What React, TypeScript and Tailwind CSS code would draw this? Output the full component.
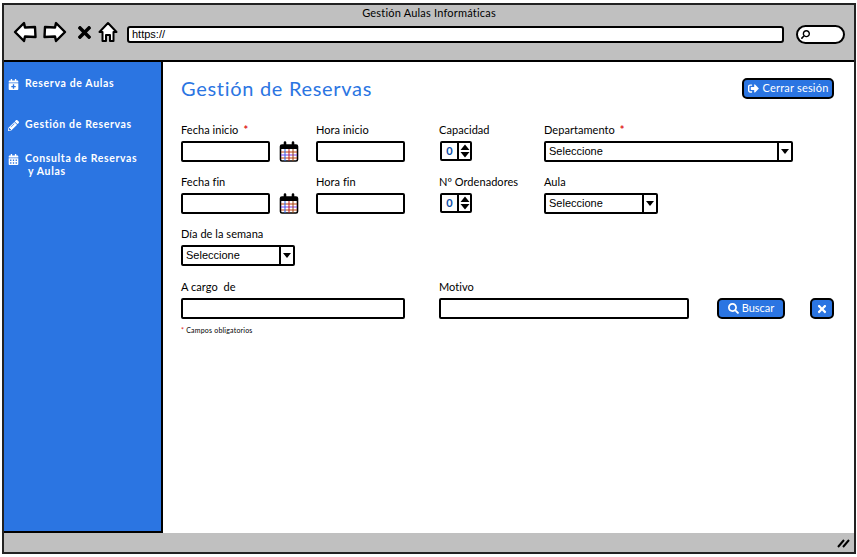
import { FaCalendarAlt, FaCalendarPlus, FaPencilAlt, FaSearch, FaSignOutAlt, FaTimes } from 'react-icons/fa';

const font = "font-['Lato','Open_Sans',sans-serif]";

function NavArrow({ flip }: { flip?: boolean }) {
  return (
    <svg width="24" height="22" viewBox="0 0 24 22" className={flip ? '-scale-x-100' : ''}>
      <path d="M2 11 L11 2 L12 6.5 L22 6 L22.5 16 L12 15.5 L11 20 Z" fill="white" stroke="black" strokeWidth="2.4" strokeLinejoin="round" />
    </svg>
  );
}

function HomeIcon() {
  return (
    <svg width="20" height="22" viewBox="0 0 20 22">
      <path d="M1.5 11 L10 2 L18.5 11 L15.5 11 L15.5 20 L12 20 L12 14 L8 14 L8 20 L4.5 20 L4.5 11 Z" fill="white" stroke="black" strokeWidth="2" strokeLinejoin="round" />
    </svg>
  );
}

function CalendarIcon() {
  return (
    <svg width="20" height="21" viewBox="0 0 20 21">
      <rect x="1.5" y="4" width="17" height="16" rx="1.5" fill="white" stroke="black" strokeWidth="1.6" />
      <rect x="2" y="4" width="16" height="4" fill="black" />
      <path d="M2 11 H18" stroke="#c2410c" strokeWidth="1" />
      <path d="M2 14 H18" stroke="#7c3aed" strokeWidth="1" />
      <path d="M2 17 H18" stroke="#c2410c" strokeWidth="1" />
      <path d="M6 8 V20" stroke="#2563eb" strokeWidth="1" />
      <path d="M10 8 V20" stroke="#b91c1c" strokeWidth="1" />
      <path d="M14 8 V20" stroke="#92400e" strokeWidth="1" />
      <path d="M6 1.5 V5 M14 1.5 V5" stroke="black" strokeWidth="2.6" strokeLinecap="round" />
    </svg>
  );
}

function Spinner() {
  return (
    <div className="ml-[1px] flex h-[20px] w-[32px] items-stretch rounded-[2px] border-2 border-black bg-white">
      <div className="flex w-[15px] items-center justify-center text-[11px] font-bold text-[#0b4da8]">0</div>
      <div className="flex flex-1 items-center justify-center border-l-2 border-black">
        <svg width="10" height="14" viewBox="0 0 10 14">
          <path d="M5 0.5 L9.5 6 H0.5 Z M5 13.5 L9.5 8 H0.5 Z" fill="black" />
        </svg>
      </div>
    </div>
  );
}

function Select({ width }: { width: string }) {
  return (
    <div className={`flex h-[21px] ${width} items-center rounded-[2px] border-2 border-black bg-white`}>
      <span className="flex-1 pl-[3px] font-['Liberation_Sans',sans-serif] text-[11px] text-black">Seleccione</span>
      <div className="flex h-full w-[14px] items-center justify-center border-l-2 border-black">
        <svg width="8" height="5" viewBox="0 0 8 5">
          <path d="M0 0 H8 L4 5 Z" fill="black" />
        </svg>
      </div>
    </div>
  );
}

function Input({ width }: { width: string }) {
  return <div className={`h-[21px] ${width} rounded-[2px] border-2 border-black bg-white`} />;
}

function Label({ text, required }: { text: string; required?: boolean }) {
  return (
    <div className="mb-[2px] flex h-[17px] items-center gap-[5px] text-[11px] tracking-[0.05px] whitespace-pre text-black">
      <span>{text}</span>
      {required && <span className="font-bold text-[#e02020]">*</span>}
    </div>
  );
}

function SideItem({ icon, lines, className }: { icon: React.ReactNode; lines: string[]; className: string }) {
  return (
    <div className={`flex gap-[6px] ${className}`}>
      <span className="flex h-[14px] w-[12px] items-center justify-center text-[11px] text-white">{icon}</span>
      <div className="text-[10.5px] leading-[13px] font-bold tracking-[0.65px] text-white">
        {lines.map((line, i) => (
          <div key={line} className={i > 0 ? 'pl-[3px]' : ''}>{line}</div>
        ))}
      </div>
    </div>
  );
}

export default function App() {
  return (
    <div className={`${font} h-[557px] w-[857px] overflow-hidden bg-white pt-[3px] pr-[1px] pb-[3px] pl-[2px]`}>
      <div className="flex h-[551px] flex-col border-2 border-[#222]">
        {/* Browser chrome */}
        <div className="h-[57px] border-b-2 border-black bg-[#c0c0c0]">
          <div className="pt-[1px] text-center text-[11px] leading-[13px] tracking-[0.2px] text-black">Gestión Aulas Informáticas</div>
          <div className="mt-[1px] flex items-center pl-[9px]">
            <NavArrow />
            <div className="ml-[6px]"><NavArrow flip /></div>
            <FaTimes className="ml-[8px] text-[19px] text-black" />
            <div className="ml-[4px]"><HomeIcon /></div>
            <div className="mt-[5px] ml-[9px] flex h-[17px] w-[657px] items-center rounded-[3px] border-2 border-black bg-white pl-[3px] font-['Liberation_Sans',sans-serif] text-[11px] text-black">
              https://
            </div>
            <div className="mt-[5px] ml-[12px] flex h-[19px] w-[49px] items-center rounded-full border-2 border-black bg-white pl-[3px]">
              <FaSearch className="-scale-x-100 text-[9px] text-black" />
            </div>
          </div>
        </div>

        <div className="flex flex-1">
          {/* Sidebar */}
          <div className="flex w-[159px] flex-col border-r-2 border-b-2 border-black bg-[#2b75e2] pt-[15px] pl-[3px]">
            <SideItem icon={<FaCalendarPlus />} lines={['Reserva de Aulas']} className="" />
            <SideItem icon={<FaPencilAlt />} lines={['Gestión de Reservas']} className="mt-[27px]" />
            <SideItem icon={<FaCalendarAlt />} lines={['Consulta de Reservas', 'y Aulas']} className="mt-[20px]" />
          </div>

          {/* Main */}
          <div className="flex-1 pt-[11px] pl-[18px]">
            <div className="flex h-[30px] items-center justify-between pr-[20px]">
              <h1 className="text-[20px] tracking-[0.7px] text-[#2b75e2]">Gestión de Reservas</h1>
              <button className="flex h-[21px] w-[92px] items-center justify-center gap-[4px] rounded-[5px] border-2 border-black bg-[#2b75e2] text-[11px] tracking-[0.2px] text-white">
                <FaSignOutAlt className="text-[11px]" />
                Cerrar sesión
              </button>
            </div>

            <div className="mt-[19px] grid grid-cols-[135px_123px_105px_1fr] gap-y-[12px]">
              <div>
                <Label text="Fecha inicio" required />
                <div className="flex items-center gap-[9px]"><Input width="w-[89px]" /><CalendarIcon /></div>
              </div>
              <div>
                <Label text="Hora inicio" />
                <Input width="w-[89px]" />
              </div>
              <div>
                <Label text="Capacidad" />
                <Spinner />
              </div>
              <div>
                <Label text="Departamento" required />
                <Select width="w-[249px]" />
              </div>

              <div>
                <Label text="Fecha fin" />
                <div className="flex items-center gap-[9px]"><Input width="w-[89px]" /><CalendarIcon /></div>
              </div>
              <div>
                <Label text="Hora fin" />
                <Input width="w-[89px]" />
              </div>
              <div>
                <Label text="Nº Ordenadores" />
                <Spinner />
              </div>
              <div>
                <Label text="Aula" />
                <Select width="w-[114px]" />
              </div>

              <div className="col-span-4">
                <Label text="Día de la semana" />
                <Select width="w-[114px]" />
              </div>

              <div className="col-span-2 mt-[1px]">
                <Label text="A cargo  de" />
                <Input width="w-[224px]" />
                <div className="mt-[6px] text-[7px] leading-[10px] tracking-[0.2px] text-black">
                  <span className="text-[#e02020]">*</span> Campos obligatorios
                </div>
              </div>
              <div className="col-span-2 mt-[1px]">
                <Label text="Motivo" />
                <div className="flex items-center">
                  <Input width="w-[250px]" />
                  <button className="ml-[28px] flex h-[21px] w-[68px] items-center justify-center gap-[3px] rounded-[5px] border-2 border-black bg-[#2b75e2] text-[11px] text-white">
                    <FaSearch className="text-[11px]" />
                    Buscar
                  </button>
                  <button className="ml-[25px] flex h-[21px] w-[24px] items-center justify-center rounded-[5px] border-2 border-black bg-[#2b75e2] text-white">
                    <FaTimes className="text-[12px]" />
                  </button>
                </div>
              </div>
            </div>
          </div>
        </div>

        {/* Status bar */}
        <div className="flex h-[19px] items-center justify-end bg-[#c0c0c0] pr-[4px]">
          <svg width="13" height="10" viewBox="0 0 13 10">
            <path d="M1 9 L7 2 M6 9 L12 2" stroke="black" strokeWidth="2" />
          </svg>
        </div>
      </div>
    </div>
  );
}
